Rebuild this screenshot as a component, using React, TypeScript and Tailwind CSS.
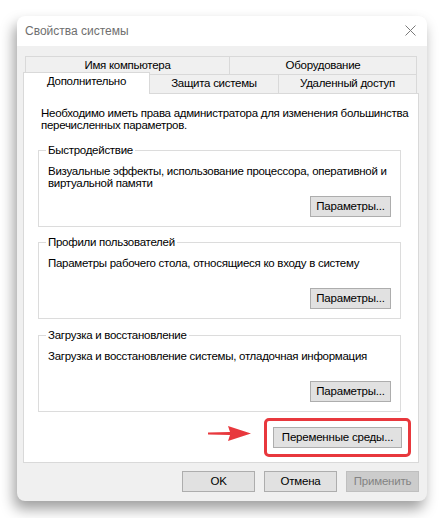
import React from 'react';

const font = { fontFamily: '"Liberation Sans", Arial, sans-serif' };

interface WinButtonProps {
  label: string;
  className?: string;
  disabled?: boolean;
}

const WinButton: React.FC<WinButtonProps> = ({ label, className = '', disabled }) => (
  <button
    className={
      'h-[21px] border text-[11.5px] tracking-[-0.2px] leading-none whitespace-nowrap flex items-center justify-center ' +
      (disabled
        ? 'bg-[#cccccc] border-[#bfbfbf] text-[#838383] '
        : 'bg-[#e1e1e1] border-[#adadad] text-black ') +
      className
    }
  >
    {label}
  </button>
);

interface GroupProps {
  title: string;
  text: React.ReactNode;
  className?: string;
}

const Group: React.FC<GroupProps> = ({ title, text, className = '' }) => (
  <div className={'relative ml-[14px] w-[363px] h-[77px] shrink-0 border border-[#dcdcdc] flex flex-col ' + className}>
    <span className="absolute -top-[7px] left-[7px] bg-white px-[2px] leading-[13px] whitespace-nowrap">{title}</span>
    <div className="pl-[9px] pt-[14px] pr-[4px] leading-[12px] whitespace-nowrap">{text}</div>
    <div className="mt-auto mb-[9px] mr-[9px] flex justify-end">
      <WinButton label="Параметры..." className="w-[81px]" />
    </div>
  </div>
);

export default function App() {
  return (
    <div
      className="w-[444px] h-[518px] bg-white overflow-hidden pt-[16px] pl-[17px] text-[11.5px] tracking-[-0.28px] text-black"
      style={font}
    >
      <div className="w-[410px] h-[485px] rounded-[8px] overflow-hidden bg-[#f0f0f0] shadow-[-3px_8px_14px_rgba(0,0,0,0.38)] flex flex-col">
        {/* title bar */}
        <div className="h-[30px] bg-white flex items-center justify-between pl-[8px] pr-[11px] shrink-0">
          <span className="text-[12px] tracking-normal text-[#6f6f6f] leading-none">Свойства системы</span>
          <svg width="11" height="11" viewBox="0 0 11 11" className="mb-[1px]">
            <path d="M0.5 0.5 L10.5 10.5 M10.5 0.5 L0.5 10.5" stroke="#7a7a7a" strokeWidth="1" />
          </svg>
        </div>

        <div className="pt-[10px] flex flex-col">
          {/* tabs row 1 */}
          <div className="ml-[8px] flex h-[18px] whitespace-nowrap">
            <div className="w-[205px] border border-b-0 border-[#d9d9d9] flex items-center justify-center">Имя компьютера</div>
            <div className="w-[187px] border border-b-0 border-l-0 border-[#d9d9d9] flex items-center justify-center">Оборудование</div>
          </div>
          {/* tabs row 2 */}
          <div className="ml-[6px] flex items-end h-[19px] whitespace-nowrap">
            <div className="relative z-10 w-[127px] h-[22px] -mb-[1px] bg-white border border-b-0 border-[#d9d9d9] flex items-center justify-center pb-[3px]">
              Дополнительно
            </div>
            <div className="w-[129px] h-[19px] border border-b-0 border-l-0 border-[#d9d9d9] flex items-center justify-center">Защита системы</div>
            <div className="w-[138px] h-[19px] border border-b-0 border-l-0 border-[#d9d9d9] flex items-center justify-center">Удаленный доступ</div>
          </div>

          {/* panel */}
          <div className="relative ml-[6px] w-[396px] h-[370px] bg-white border border-[#d9d9d9] flex flex-col">
            <p className="pl-[17px] pt-[13px] leading-[12px] whitespace-nowrap">
              Необходимо иметь права администратора для изменения большинства
              <br />
              перечисленных параметров.
            </p>
            <Group
              className="mt-[19px]"
              title="Быстродействие"
              text={
                <>
                  Визуальные эффекты, использование процессора, оперативной и
                  <br />
                  виртуальной памяти
                </>
              }
            />
            <Group className="mt-[15px]" title="Профили пользователей" text="Параметры рабочего стола, относящиеся ко входу в систему" />
            <Group className="mt-[16px]" title="Загрузка и восстановление" text="Загрузка и восстановление системы, отладочная информация" />

            <div className="mt-[15px] ml-[249px] flex">
              <WinButton label="Переменные среды..." className="w-[129px]" />
            </div>

            {/* highlight annotation */}
            <div className="absolute left-[240px] top-[324px] w-[147px] h-[39px] border-[3px] border-[#e8383d] rounded-[5px]" />
            <svg className="absolute left-[184px] top-[331px]" width="45" height="18" viewBox="0 0 45 18">
              <path d="M0 7.5 L22 7 L20 1 L43 8.5 L20 16 L22 10 L0 9.5 Z" fill="#e8383d" />
            </svg>
          </div>

          {/* bottom buttons */}
          <div className="mt-[8px] mr-[8px] flex justify-end gap-[9px]">
            <WinButton label="OK" className="w-[73px]" />
            <WinButton label="Отмена" className="w-[73px]" />
            <WinButton label="Применить" className="w-[73px]" disabled />
          </div>
        </div>
      </div>
    </div>
  );
}
